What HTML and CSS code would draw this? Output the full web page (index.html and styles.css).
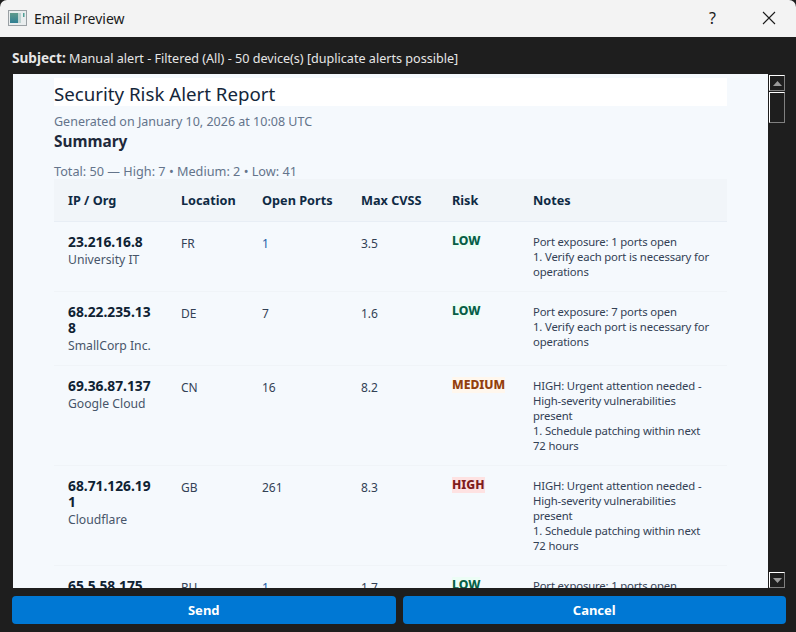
FILE: index.html
```html
<!DOCTYPE html>
<html lang="en">
<head>
<meta charset="utf-8">
<title>Email Preview</title>
<link rel="stylesheet" href="styles.css">
</head>
<body>
<div class="window">
  <header class="titlebar">
    <svg class="app-icon" width="19" height="16" viewBox="0 0 19 16">
      <defs><linearGradient id="ig" x1="0" y1="0" x2="0" y2="1"><stop offset="0" stop-color="#5f9a8c"/><stop offset="1" stop-color="#2f7f93"/></linearGradient></defs>
      <rect x="0.5" y="0.5" width="18" height="15" fill="#e9edee" stroke="#9aa0a4"/>
      <rect x="2" y="3" width="8" height="10" fill="url(#ig)"/>
      <rect x="10" y="3" width="3" height="10" fill="#bcd2d0"/>
      <rect x="15" y="3" width="1.5" height="4" fill="#4f9f95"/>
    </svg>
    <span class="window-title">Email Preview</span>
    <span class="help">?</span>
    <svg class="close" width="14" height="14" viewBox="0 0 14 14"><path d="M1 1 L13 13 M13 1 L1 13" stroke="#1a1a1a" stroke-width="1.1" fill="none"/></svg>
  </header>
  <div class="subject"><b>Subject:</b> Manual alert - Filtered (All) - 50 device(s) [duplicate alerts possible]</div>
  <div class="viewer">
    <main class="content">
      <div class="report">
        <h1>Security Risk Alert Report</h1>
        <p class="generated">Generated on January 10, 2026 at 10:08 UTC</p>
        <h2>Summary</h2>
        <p class="totals">Total: 50 — High: 7 • Medium: 2 • Low: 41</p>
        <table>
          <colgroup>
            <col class="c-ip"><col class="c-loc"><col class="c-ports"><col class="c-cvss"><col class="c-risk"><col class="c-notes">
          </colgroup>
          <thead>
            <tr><th>IP / Org</th><th>Location</th><th>Open Ports</th><th>Max CVSS</th><th>Risk</th><th>Notes</th></tr>
          </thead>
          <tbody>
            <tr>
              <td><div class="ip">23.216.16.8</div><div class="org">University IT</div></td>
              <td class="val">FR</td><td class="val link">1</td><td class="val">3.5</td>
              <td><span class="risk low">LOW</span></td>
              <td class="notes">Port exposure: 1 ports open<br>1. Verify each port is necessary for operations</td>
            </tr>
            <tr>
              <td><div class="ip">68.22.235.138</div><div class="org">SmallCorp Inc.</div></td>
              <td class="val">DE</td><td class="val">7</td><td class="val">1.6</td>
              <td><span class="risk low">LOW</span></td>
              <td class="notes">Port exposure: 7 ports open<br>1. Verify each port is necessary for operations</td>
            </tr>
            <tr>
              <td><div class="ip">69.36.87.137</div><div class="org">Google Cloud</div></td>
              <td class="val">CN</td><td class="val">16</td><td class="val">8.2</td>
              <td><span class="risk medium">MEDIUM</span></td>
              <td class="notes">HIGH: Urgent attention needed - High-severity vulnerabilities present<br>1. Schedule patching within next 72 hours</td>
            </tr>
            <tr>
              <td><div class="ip">68.71.126.191</div><div class="org">Cloudflare</div></td>
              <td class="val">GB</td><td class="val">261</td><td class="val">8.3</td>
              <td><span class="risk high">HIGH</span></td>
              <td class="notes">HIGH: Urgent attention needed - High-severity vulnerabilities present<br>1. Schedule patching within next 72 hours</td>
            </tr>
            <tr>
              <td><div class="ip">65.5.58.175</div><div class="org">Amazon</div></td>
              <td class="val">RU</td><td class="val link">1</td><td class="val">1.7</td>
              <td><span class="risk low">LOW</span></td>
              <td class="notes">Port exposure: 1 ports open<br>1. Verify each port is necessary for operations</td>
            </tr>
          </tbody>
        </table>
      </div>
    </main>
    <aside class="scrollbar">
      <div class="sb-top">
        <div class="sb-btn"><svg width="9" height="5" viewBox="0 0 9 5"><path d="M4.5 0 L9 5 L0 5 Z" fill="#9a9a9a"/></svg></div>
        <div class="sb-thumb"></div>
      </div>
      <div class="sb-btn"><svg width="9" height="5" viewBox="0 0 9 5"><path d="M0 0 L9 0 L4.5 5 Z" fill="#9a9a9a"/></svg></div>
    </aside>
  </div>
  <footer class="actions">
    <button class="btn" type="button">Send</button>
    <button class="btn" type="button">Cancel</button>
  </footer>
</div>
</body>
</html>
```
FILE: styles.css
```css
html, body { margin: 0; padding: 0; height: 100%; background: #1e1e1e; }
* { box-sizing: border-box; }
body { font-family: "Noto Sans", "Open Sans", sans-serif; overflow: hidden; }
.window { display: flex; flex-direction: column; width: 796px; height: 632px; }

.titlebar { flex: none; height: 37px; background: #f3f3f3; border-radius: 7px 7px 0 0; display: flex; align-items: center; padding: 0 20px 0 8px; }
.app-icon { flex: none; margin-right: 7px; margin-top: -1px; }
.window-title { flex: 1; font-size: 14px; color: #1a1a1a; margin-top: -1px; }
.help { font-size: 16px; color: #1a1a1a; margin-right: 46px; margin-top: -2px; }
.close { margin-top: -1px; }

.subject { flex: none; height: 37px; padding: 12px 0 0 12px; font-size: 12.6px; line-height: 18px; color: #e6e6e6; white-space: nowrap; }
.subject b { font-weight: 700; font-size: 13.6px; }

.viewer { flex: none; height: 514px; display: flex; margin-left: 13px; width: 772px; }
.content { flex: none; width: 755px; height: 514px; overflow: hidden; background: #f5f9fd; padding: 4px 41px 0; }
.report { width: 673px; }

h1 { margin: 0; height: 28px; background: #fff; font-size: 18.7px; font-weight: 400; line-height: 32px; color: #14263a; }
.generated { margin: 7px 0 0; font-size: 12.5px; line-height: 17px; color: #64748b; }
h2 { margin: 2px 0 0; font-size: 15.4px; line-height: 20px; font-weight: 700; color: #1e293b; }
.totals { margin: 12px 0 0; font-size: 12.7px; line-height: 15px; color: #64748b; }

table { width: 673px; border-collapse: collapse; table-layout: fixed; margin-top: 0; }
.c-ip { width: 113px; } .c-loc { width: 81px; } .c-ports { width: 99px; }
.c-cvss { width: 91px; } .c-risk { width: 81px; } .c-notes { width: 208px; }
th { height: 42px; background: #f1f5f9; border-bottom: 1px solid #e8eef5; text-align: left; padding: 0 14px; font-size: 12.7px; font-weight: 700; color: #0f2a44; white-space: nowrap; }
td { vertical-align: top; padding: 12px 14px 12px; border-bottom: 1px solid #f0f4f8; }
.ip { font-size: 13.8px; line-height: 16px; font-weight: 700; color: #0f2233; overflow-wrap: anywhere; }
.org { font-size: 12.2px; line-height: 17px; color: #475569; margin: 1px 0 -1px; }
.val { font-size: 12px; line-height: 16px; color: #334155; padding-top: 14px; }
.link { color: #1d5fa8; }
.notes { font-size: 11.3px; line-height: 15px; letter-spacing: -0.15px; color: #334155; padding-right: 14px; }
.risk { display: inline-block; font-size: 12.2px; line-height: 16px; font-weight: 800; vertical-align: top; margin-top: -1px; }
.low { background: #ecfdf5; color: #065f46; }
.medium { background: #fff7ed; color: #92400e; }
.high { background: #fee2e2; color: #7f1d1d; }

.scrollbar { flex: none; width: 17px; height: 514px; display: flex; flex-direction: column; justify-content: space-between; padding-top: 1px; }
.sb-top { display: flex; flex-direction: column; gap: 1px; }
.sb-btn { width: 16px; height: 16px; margin-left: 1px; display: flex; align-items: center; justify-content: center; border: 1px solid; border-color: #fff #808080 #808080 #fff; background: #1e1e1e; }
.sb-thumb { width: 16px; height: 31px; margin-left: 1px; border: 1px solid; border-color: #fff #808080 #808080 #fff; background: #1e1e1e; }

.actions { flex: none; display: flex; gap: 7px; padding: 8px 10px 8px 12px; }
.btn { flex: 1; height: 28px; border: 0; border-radius: 4px; background: #0078d4; color: #fff; font-family: inherit; font-size: 13px; font-weight: 700; padding: 0; }
```
